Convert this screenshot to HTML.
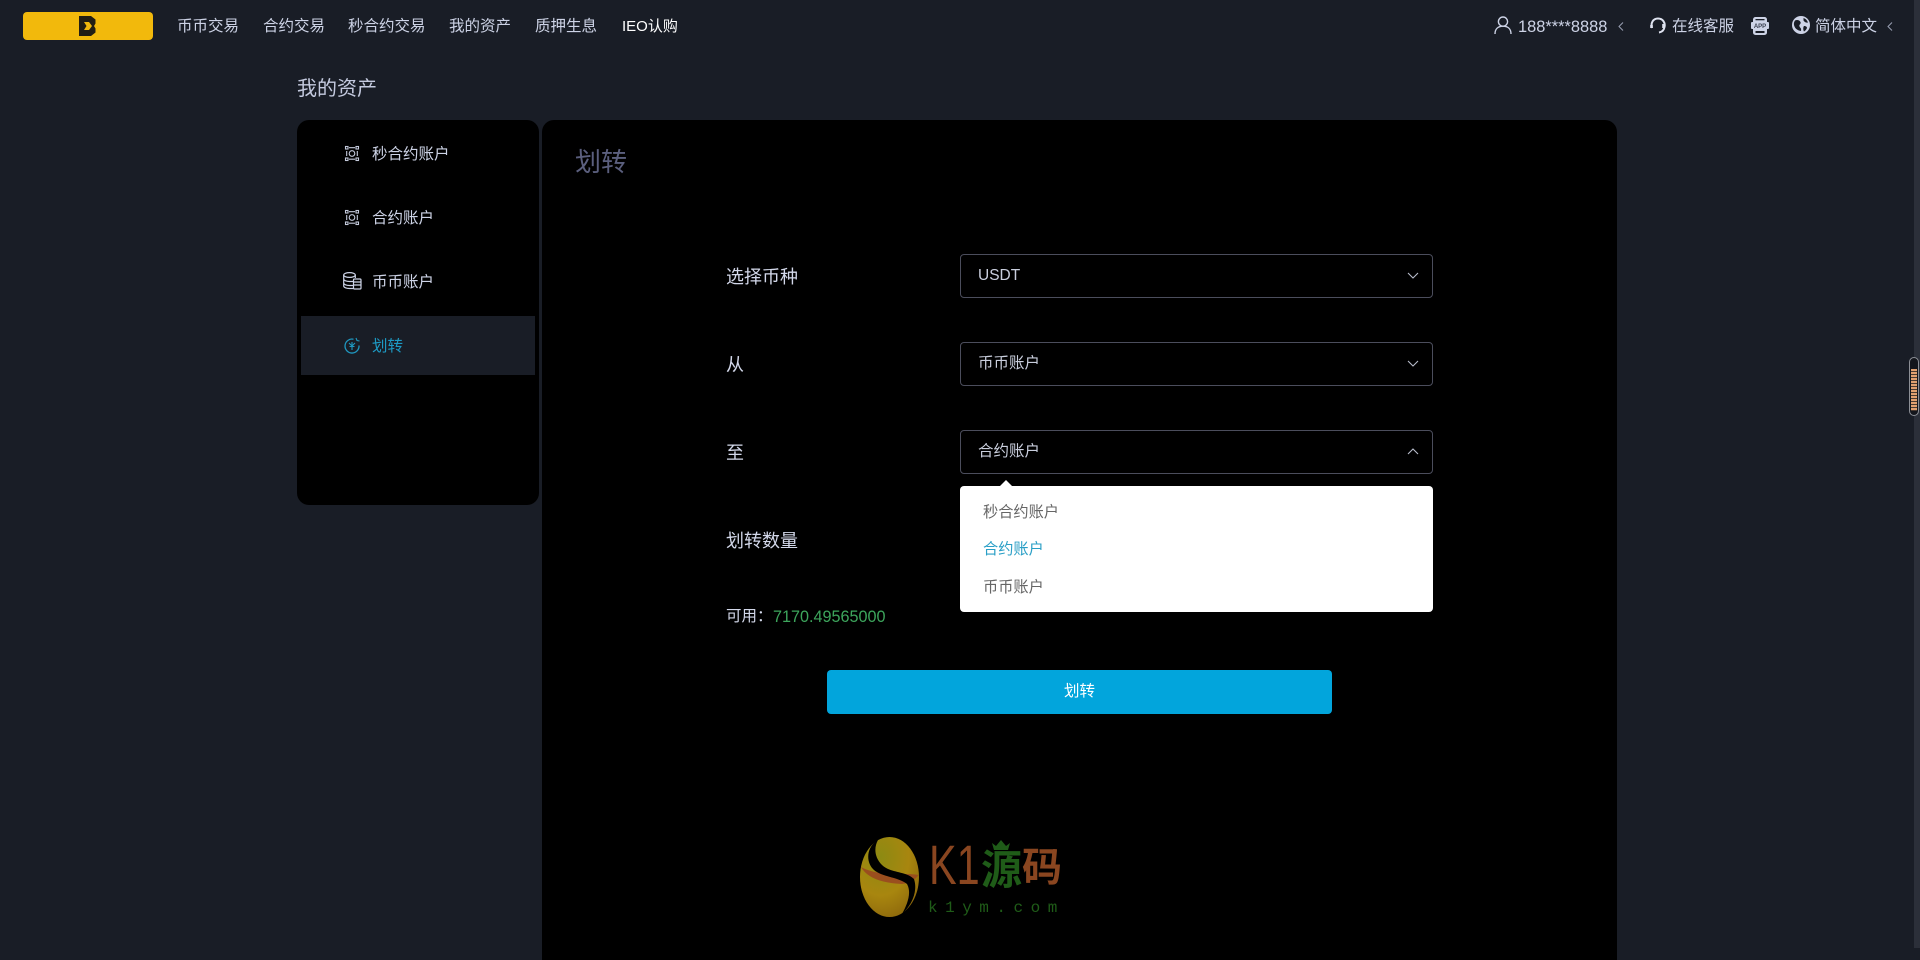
<!DOCTYPE html>
<html lang="zh-CN">
<head>
<meta charset="utf-8">
<title>划转</title>
<style>
html,body{margin:0;padding:0;width:1920px;height:948px;overflow:hidden;background:#191d26;font-family:"Liberation Sans","Noto Sans CJK SC",sans-serif;}
.t{position:absolute;white-space:nowrap;line-height:20px;font-size:15.5px;color:#cdd3e6;font-family:"Liberation Sans","Noto Sans CJK SC",sans-serif;}
.a{position:absolute;}
svg{position:absolute;overflow:visible;}
.sel{position:absolute;left:960px;width:471px;height:42px;border:1px solid #4b4d5c;border-radius:4px;background:#000;}
.lb{font-size:18px;line-height:24px;color:#d3d8ea;}
</style>
</head>
<body>
<!-- logo -->
<div class="a" style="left:23px;top:12px;width:130px;height:28px;background:#f2b90c;border-radius:4px;"></div>
<svg style="left:79px;top:16px" width="17" height="20" viewBox="0 0 17 20"><path d="M0 0H12L16.5 3.5V7.5L15 10L16.5 12.5V16.5L12 20H0Z" fill="#221e14"/><path d="M5 6H10L13 10L10 14H5L7.5 10Z" fill="#f2b90c"/></svg>

<!-- nav -->
<div class="t" style="left:177px;top:17px">币币交易</div>
<div class="t" style="left:263px;top:17px">合约交易</div>
<div class="t" style="left:348px;top:17px">秒合约交易</div>
<div class="t" style="left:449px;top:17px">我的资产</div>
<div class="t" style="left:535px;top:17px">质押生息</div>
<div class="t" style="left:622px;top:17px;color:#fff;font-size:15px">IEO认购</div>

<!-- right nav -->
<svg style="left:1494px;top:16px" width="18" height="18" viewBox="0 0 18 18" fill="none" stroke="#cdd3e6" stroke-width="1.4"><circle cx="9" cy="5.6" r="4.6"/><path d="M1 18C1 13 4 10.2 9 10.2S17 13 17 18"/></svg>
<div class="t" style="left:1518px;top:17px;font-size:16.4px">188****8888</div>
<svg style="left:1618px;top:22px" width="6" height="9" viewBox="0 0 6 9" fill="none" stroke="#9aa0b4" stroke-width="1"><path d="M5 .5L1 4.5L5 8.5"/></svg>
<svg style="left:1650px;top:17px" width="16" height="18" viewBox="0 0 16 18" fill="none" stroke="#dfe3f0" stroke-width="2"><path d="M2 11C.5 6 3 1.5 8 1.5S15.5 6 14.5 10C14 13 12 15 9 15.5"/><path d="M13.5 7V11M1.5 8V11" stroke-width="2.6"/></svg>
<div class="t" style="left:1672px;top:17px">在线客服</div>
<svg style="left:1751px;top:17px" width="18" height="18" viewBox="0 0 18 18"><rect x="2" y="0" width="14" height="18" rx="2.5" fill="#cdd3e6"/><rect x="0" y="5" width="18" height="7" rx="1" fill="#cdd3e6"/><rect x="4.5" y="2" width="9" height="1.3" fill="#191d26"/><rect x="4.5" y="14" width="9" height="2" fill="#191d26"/><text x="9" y="11" font-size="6" text-anchor="middle" font-family="Liberation Sans" font-weight="700" fill="#3a4050">APP</text></svg>
<svg style="left:1792px;top:16px" width="18" height="18" viewBox="0 0 18 18"><circle cx="9" cy="9" r="9" fill="#cdd3e6"/><path d="M3 4.5C5 3.5 7.5 4 8.5 6S6.5 8.5 7.5 10.5S9.5 12 9 15C6 14.5 3.5 13 2.5 10.5S1.8 6.5 3 4.5ZM11.5 2C13.5 2.5 15 4 16 6.5C14 7 12.5 6 11.5 4.5ZM12 10C14 10 15 11 15 12C14 14 13 15 12 15.5C11 14 11 11 12 10Z" fill="#191d26"/></svg>
<div class="t" style="left:1815px;top:17px">简体中文</div>
<svg style="left:1887px;top:22px" width="6" height="9" viewBox="0 0 6 9" fill="none" stroke="#9aa0b4" stroke-width="1"><path d="M5 .5L1 4.5L5 8.5"/></svg>

<!-- scrollbar -->
<div class="a" style="left:1914px;top:0;width:6px;height:948px;background:#2b2f39;"></div>
<div class="a" style="left:1909px;top:357px;width:8px;height:57px;border:1px solid #8c8f96;border-radius:5px;background:#14161c;"></div>
<div class="a" style="left:1911px;top:369px;width:6px;height:42px;background:repeating-linear-gradient(180deg,#e0a070 0,#e0a070 2px,#4a3a30 2px,#4a3a30 3px);"></div>

<!-- page title -->
<div class="t" style="left:297px;top:77px;font-size:20px;line-height:24px;color:#c4cadf">我的资产</div>

<!-- sidebar -->
<div class="a" style="left:297px;top:120px;width:242px;height:385px;background:#000;border-radius:12px;"></div>
<div class="a" style="left:301px;top:316px;width:234px;height:59px;background:#191d26;"></div>

<svg style="left:345px;top:146px" width="14" height="15" viewBox="0 0 14 15" fill="none" stroke="#c4cadc" stroke-width="1.1"><rect x=".5" y=".5" width="2.5" height="2.5"/><rect x="11" y=".5" width="2.5" height="2.5"/><rect x=".5" y="12" width="2.5" height="2.5"/><rect x="11" y="12" width="2.5" height="2.5"/><path d="M4 1.7H10M4 13.2H10M1.7 5V10M12.3 5V10"/><circle cx="7" cy="7.5" r="2.8"/></svg>
<div class="t" style="left:372px;top:145px">秒合约账户</div>

<svg style="left:345px;top:210px" width="14" height="15" viewBox="0 0 14 15" fill="none" stroke="#c4cadc" stroke-width="1.1"><rect x=".5" y=".5" width="2.5" height="2.5"/><rect x="11" y=".5" width="2.5" height="2.5"/><rect x=".5" y="12" width="2.5" height="2.5"/><rect x="11" y="12" width="2.5" height="2.5"/><path d="M4 1.7H10M4 13.2H10M1.7 5V10M12.3 5V10"/><circle cx="7" cy="7.5" r="2.8"/></svg>
<div class="t" style="left:372px;top:209px">合约账户</div>

<svg style="left:343px;top:272px" width="19" height="18" viewBox="0 0 19 18" fill="none" stroke="#cdd3e6" stroke-width="1.2"><ellipse cx="6.5" cy="3" rx="5.8" ry="2.4"/><path d="M.7 3V14C.7 15.5 3.5 16.5 6.5 16.5H10M.7 7C.7 8.5 3.5 9.5 6.5 9.5H10M.7 11C.7 12.5 3.5 13.5 6.5 13.5H10M12.3 3V6"/><rect x="10.5" y="7" width="7.5" height="10" rx="1"/><path d="M11 10H17.5M11 13H17.5"/></svg>
<div class="t" style="left:372px;top:273px">币币账户</div>

<svg style="left:344px;top:337px" width="16" height="17" viewBox="0 0 16 17" fill="none" stroke="#1f97bf" stroke-width="1.3"><path d="M9.5 2.2A7 7 0 1 0 15 8.5"/><path d="M5 6L8 9L11 6M8 5V13M5.5 9.5H10.5M12 1L13 3.5L15.5 4" stroke-width="1.1"/></svg>
<div class="t" style="left:372px;top:337px;color:#1d9ac4">划转</div>

<!-- main panel -->
<div class="a" style="left:542px;top:120px;width:1075px;height:840px;background:#000;border-radius:12px 12px 0 0;"></div>
<div class="t" style="left:575px;top:145px;font-size:26px;line-height:34px;color:#5b5f7e">划转</div>

<div class="t lb" style="left:726px;top:265px">选择币种</div>
<div class="t lb" style="left:726px;top:353px">从</div>
<div class="t lb" style="left:726px;top:441px">至</div>
<div class="t lb" style="left:726px;top:529px">划转数量</div>

<div class="sel" style="top:254px"></div>
<div class="t" style="left:978px;top:266px;color:#c9cedd">USDT</div>
<svg style="left:1407px;top:272px" width="12" height="7" viewBox="0 0 12 7" fill="none" stroke="#b8bccb" stroke-width="1.1"><path d="M1 1L6 6L11 1"/></svg>

<div class="sel" style="top:342px"></div>
<div class="t" style="left:978px;top:354px;color:#c9cedd">币币账户</div>
<svg style="left:1407px;top:360px" width="12" height="7" viewBox="0 0 12 7" fill="none" stroke="#b8bccb" stroke-width="1.1"><path d="M1 1L6 6L11 1"/></svg>

<div class="sel" style="top:430px"></div>
<div class="t" style="left:978px;top:442px;color:#c9cedd">合约账户</div>
<svg style="left:1407px;top:448px" width="12" height="7" viewBox="0 0 12 7" fill="none" stroke="#b8bccb" stroke-width="1.1"><path d="M1 6L6 1L11 6"/></svg>

<!-- dropdown -->
<div class="a" style="left:960px;top:486px;width:473px;height:126px;background:#fff;border-radius:4px;"></div>
<svg style="left:1000px;top:480px" width="12" height="6" viewBox="0 0 12 6"><path d="M0 6L6 0L12 6Z" fill="#fff"/></svg>
<div class="t" style="left:983px;top:503px;color:#666;font-size:15.2px">秒合约账户</div>
<div class="t" style="left:983px;top:540px;color:#2a9fc6;font-size:15.2px">合约账户</div>
<div class="t" style="left:983px;top:578px;color:#666;font-size:15.2px">币币账户</div>

<!-- available -->
<div class="t" style="left:726px;top:607px;color:#d3d8ea">可用：</div>
<div class="t" style="left:773px;top:607px;color:#3da55c;font-size:16.2px">7170.49565000</div>

<!-- button -->
<div class="a" style="left:827px;top:670px;width:505px;height:44px;background:#02a5dc;border-radius:4px;"></div>
<div class="t" style="left:1064px;top:682px;color:#fff">划转</div>

<!-- watermark -->
<svg style="left:860px;top:837px" width="59" height="80" viewBox="0 0 59 80">
<defs><radialGradient id="eg" cx="35%" cy="25%" r="80%"><stop offset="0" stop-color="#8d8a12"/><stop offset=".6" stop-color="#a8860f"/><stop offset="1" stop-color="#8f6a0c"/></radialGradient></defs>
<ellipse cx="29.5" cy="40" rx="29.5" ry="40" fill="url(#eg)"/>
<path d="M1 30C8 42 24 46 42 47C50 46 56 42 58.5 38C50 36 38 38 28 37C16 36 6 33 1 30Z" fill="#9a4e1e"/>
<path d="M16 4C6 12 6 26 14 33C22 40 38 40 47 47C52 56 47 68 42 77C52 68 58 54 54 42C46 34 30 36 22 28C14 20 14 10 18 3Z" fill="#000"/>
</svg>
<div class="t" style="left:929px;top:838px;font-size:56px;line-height:54px;color:#8a4620;font-family:'Liberation Sans',sans-serif;transform:scaleX(.74);transform-origin:0 0">K1</div>
<div class="t" style="left:981px;top:845px;font-size:41px;line-height:50px;font-weight:700;color:#1f5c18">源</div>
<svg style="left:990px;top:840px" width="22" height="10" viewBox="0 0 22 10" fill="#1f5c18"><path d="M2 3L6 6L11 0L16 6L20 3L18 10H4Z"/></svg>
<div class="t" style="left:1022px;top:843px;font-size:40px;line-height:50px;font-weight:700;color:#8a4620">码</div>
<div class="t" style="left:928px;top:898px;font-size:16px;line-height:20px;letter-spacing:7.5px;color:#1f5c18;font-family:'Liberation Mono',monospace">k1ym.com</div>
</body>
</html>
